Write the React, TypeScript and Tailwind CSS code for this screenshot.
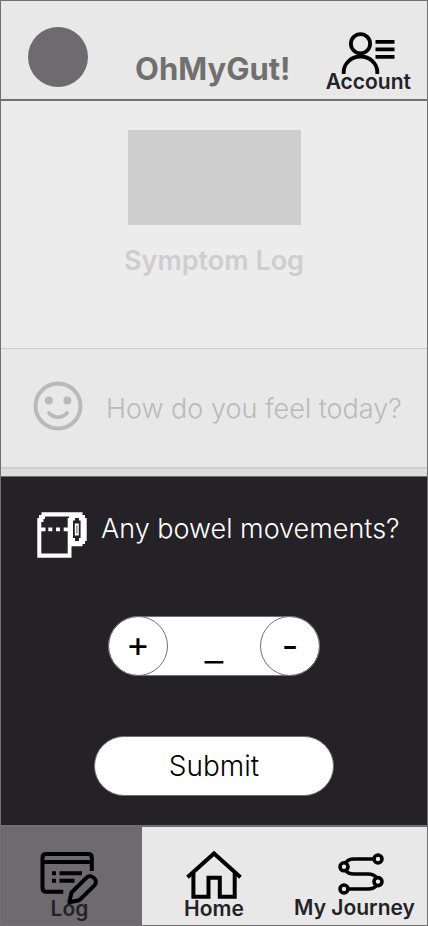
import type { ReactNode } from "react";

export default function App() {
  return (
    <div className="flex min-h-screen w-full flex-col border border-[#707070] bg-[#ececec] font-['Inter','Liberation_Sans',sans-serif]">
      <Header />
      <main className="flex flex-1 flex-col">
        <section className="flex flex-1 flex-col items-center pt-[29px] pb-[71px] text-[#cecece]">
          <div className="h-[95px] w-[173px] bg-[#cecece]" />
          <h2 className="mt-5 text-[27px] leading-8 font-semibold">Symptom Log</h2>
        </section>

        <section className="flex h-[121px] items-center border-t border-b-2 border-[#cecece] bg-[#e8e8e8] pt-0.5 pr-7 pl-8">
          <SmileyIcon />
          <h3 className="ml-[23px] text-[27px] leading-[34px] font-light whitespace-nowrap text-[#bababa]">
            How do you feel today?
          </h3>
        </section>

        <div className="h-[7px] bg-[#dddddd]" />

        <BowelMovements />
      </main>
      <BottomNav />
    </div>
  );
}

function Header() {
  return (
    <header className="flex h-[100px] items-end justify-between border-b-2 border-[#707070] bg-[#e8e8e8] pr-4 pl-[27px]">
      <div className="mb-3 size-[60px] rounded-full bg-[#6e6b70]" />
      <h1 className="mb-2.5 ml-3 text-[31px] leading-10 font-bold text-[#707070]">OhMyGut!</h1>
      <a href="#account" className="mb-[9px] flex flex-col items-center text-[#242227]">
        <AccountIcon />
        <span className="text-[21px] leading-4 font-semibold">Account</span>
      </a>
    </header>
  );
}

function BowelMovements() {
  return (
    <section className="flex flex-col items-center border-t border-[#707070] bg-[#242227] pb-[29px]">
      <div className="flex w-full items-start pt-[35px] pl-9">
        <PaperRollIcon />
        <h3 className="ml-[14px] text-[27px] leading-[34px] font-light whitespace-nowrap text-white">
          Any bowel movements?
        </h3>
      </div>

      <div className="mt-[58px] flex h-[60px] w-[212px] items-center justify-between rounded-full border border-[#707070] bg-white text-black">
        <button
          type="button"
          aria-label="Add one"
          className="-ml-px size-[60px] rounded-full border border-[#707070] pb-1 text-[36px] leading-none"
        >
          +
        </button>
        <output className="text-[42px] leading-none font-light">_</output>
        <button
          type="button"
          aria-label="Remove one"
          className="-mr-px size-[60px] rounded-full border border-[#707070] text-[36px] leading-none"
        >
          -
        </button>
      </div>

      <button
        type="submit"
        className="mt-[60px] h-[60px] w-[240px] rounded-full border border-[#707070] bg-white text-[28px] font-light text-black"
      >
        Submit
      </button>
    </section>
  );
}

function BottomNav() {
  return (
    <nav className="grid h-[100px] grid-cols-[141fr_144fr_141fr] border-t-2 border-[#707070] bg-[#e8e8e8]">
      <NavItem href="#log" label="Log" className="bg-[#6e6b70] pr-1" active>
        <LogIcon />
      </NavItem>
      <NavItem href="#home" label="Home">
        <HomeIcon />
      </NavItem>
      <NavItem href="#journey" label="My Journey" className="pr-1">
        <JourneyIcon />
      </NavItem>
    </nav>
  );
}

type NavItemProps = {
  href: string;
  label: string;
  active?: boolean;
  className?: string;
  children: ReactNode;
};

function NavItem({ href, label, active, className = "", children }: NavItemProps) {
  return (
    <a
      href={href}
      aria-current={active ? "page" : undefined}
      className={`flex flex-col items-center pt-[23px] whitespace-nowrap text-[#242227] ${className}`}
    >
      {children}
      <span className="-mt-1.5 text-[21px] leading-6 font-semibold">{label}</span>
    </a>
  );
}

function AccountIcon() {
  return (
    <svg className="h-[42px] w-[54px]" viewBox="341 32 54 42" fill="none" stroke="#000" strokeWidth="3.8" aria-hidden="true">
      <circle cx="360.5" cy="43.7" r="9.6" />
      <path d="M343.7 74v-2a16.8 15.5 0 0 1 33.6 0v2" />
      <path d="M375.5 41.8h19M375.5 49.3h19M375.5 56.8h19" />
    </svg>
  );
}

function SmileyIcon() {
  return (
    <svg className="mb-1.5 size-[50px] shrink-0" viewBox="33 381 50 50" fill="none" stroke="#bababa" strokeWidth="4" aria-hidden="true">
      <circle cx="58" cy="406" r="22.5" />
      <circle cx="48.8" cy="400.5" r="4" fill="#bababa" stroke="none" />
      <circle cx="67.4" cy="400.5" r="4" fill="#bababa" stroke="none" />
      <path d="M49 413c4.5 5.5 13.5 5.5 18 0" strokeWidth="3.6" strokeLinecap="round" />
    </svg>
  );
}

function PaperRollIcon() {
  return (
    <svg className="h-[46px] w-[50px] shrink-0" viewBox="37 512 50 46" fill="#fff" aria-hidden="true">
      {/* sheet */}
      <path
        fillRule="evenodd"
        d="M41.5 512.3H82.5V515H85V518H86.7V541H85V544H82.5V546.3H71.5V557.7H37.3V518H39V515H41.5ZM45 516.5V519H43.5V522H41.3V527.5H45.5V531.3H41.3V553.5H67.7V531.3H63.7V527.5H67.7V518H69V516.5Z"
      />
      {/* perforation */}
      <path d="M48.3 527.5h4v3.8h-4zM56 527.5h4v3.8h-4z" />
      {/* roll end */}
      <path
        fill="#242227"
        fillRule="evenodd"
        d="M75 518H79V520.5H80.6V538H79V541H75V538H73V520.5H75ZM74.8 523.5V535.5H78.8V523.5Z"
      />
      <path fill="#8a888c" d="M76.2 525.5h1.4v8h-1.4z" />
    </svg>
  );
}

function LogIcon() {
  return (
    <svg className="h-[53px] w-[58px] overflow-visible" viewBox="41 851 58 53" fill="none" stroke="#000" strokeWidth="4" aria-hidden="true">
      <path d="M91.8 872V858.5Q91.8 855 88.3 855H46Q42.5 855 42.5 858.5V889Q42.5 892.8 46.3 892.8H63.3" />
      <path d="M42.5 863H91.8" />
      <path d="M52 874.3h4M59.5 874.3H82M52 881.7h4M59.5 881.7H74.5" />
      <path d="M69.3 903.2L71.5 893.5L86.6 878.6C91 874 99 881.5 94.5 886.3L79.4 901.2Z" strokeLinejoin="round" />
    </svg>
  );
}

function HomeIcon() {
  return (
    <svg className="h-[53px] w-[56px]" viewBox="186 850 56 53" fill="none" stroke="#000" strokeWidth="4" aria-hidden="true">
      <path d="M187.5 877.3L214 853.5L240.5 877.3" />
      <path d="M193.4 873V896.7H208.5V877.7H219.8V896.7H234.7V873" />
    </svg>
  );
}

function JourneyIcon() {
  return (
    <svg className="h-[52px] w-[58px]" viewBox="326 850 58 52" fill="none" stroke="#000" strokeWidth="3.6" aria-hidden="true">
      <circle cx="378" cy="859" r="4" />
      <circle cx="344" cy="866.8" r="4" />
      <circle cx="378" cy="881.6" r="4" />
      <circle cx="344" cy="889" r="4" />
      <path d="M374 859H354Q348 859 345.5 863M345.5 870.5Q348 874 354 874H368Q374 874 376.5 877.8M376.5 885.5Q374 889 368 889H348" />
    </svg>
  );
}
